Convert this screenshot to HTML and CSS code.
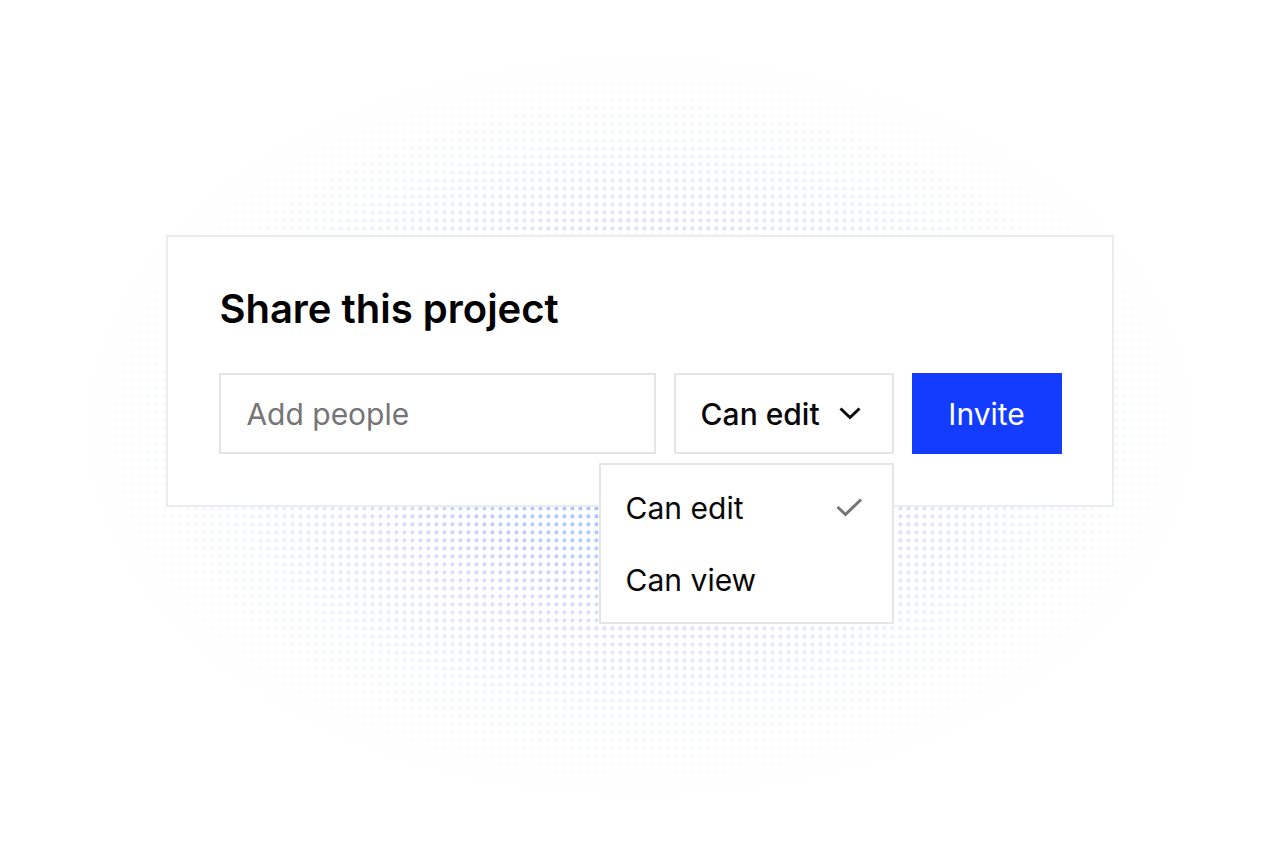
FILE: index.html
```html
<!DOCTYPE html>
<html lang="en">
<head>
  <meta charset="utf-8">
  <meta name="viewport" content="width=device-width, initial-scale=1">
  <title>Share this project</title>
  <link rel="stylesheet" href="styles.css">
</head>
<body>
  <main class="stage">
    <svg class="halftone" aria-hidden="true">
      <defs>
        <pattern id="dots" width="8" height="8" patternUnits="userSpaceOnUse">
          <circle cx="4.4" cy="4.4" r="2.05" fill="#94b2f5"/>
        </pattern>
      </defs>
      <rect width="100%" height="100%" fill="url(#dots)"/>
    </svg>
    <form class="card">
      <h1 class="title">Share this project</h1>
      <div class="row">
        <input class="people" type="text" placeholder="Add people" aria-label="Add people">
        <div class="permission">
          <select class="permission-select" aria-label="Permission">
            <option selected>Can edit</option>
            <option>Can view</option>
          </select>
          <svg class="chevron" viewBox="0 0 24 16" aria-hidden="true"><path d="M2.5 2.5L12 11.5L21.5 2.5"/></svg>
          <div class="menu" role="listbox" aria-label="Permission options">
            <button class="option" type="button" role="option" aria-selected="true">
              Can edit
              <svg class="check" viewBox="0 0 28 22" aria-hidden="true"><path d="M2.5 10L10.5 17.5L26 2.5"/></svg>
            </button>
            <button class="option" type="button" role="option" aria-selected="false">Can view</button>
          </div>
        </div>
        <button class="invite" type="button">Invite</button>
      </div>
    </form>
  </main>
</body>
</html>
```
FILE: styles.css
```css
* { box-sizing: border-box; }

body {
  margin: 0;
  background: #fff;
  color: #080808;
  font-family: Inter, "Liberation Sans", sans-serif;
  font-size: 30px;
}

.stage {
  position: relative;
  min-height: 100vh;
  padding: 235px 13%;
}

/* Halftone glow behind the card */
.halftone {
  position: absolute;
  inset: 0;
  width: 100%;
  height: 100%;
  -webkit-mask-image: radial-gradient(ellipse 44% 44% at 50% 50%, #000 0%, rgba(0, 0, 0, .8) 22%, rgba(0, 0, 0, .37) 52%, rgba(0, 0, 0, .1) 80%, transparent 100%);
  mask-image: radial-gradient(ellipse 44% 44% at 50% 50%, #000 0%, rgba(0, 0, 0, .8) 22%, rgba(0, 0, 0, .37) 52%, rgba(0, 0, 0, .1) 80%, transparent 100%);
}

.card {
  position: relative;
  padding: 48px 50px 51px 51px;
  border: 2px solid #eaecee;
  background: #fff;
}

.title {
  margin: 0 0 40px;
  color: #000;
  font-size: 40px;
  font-weight: 600;
  line-height: 48px;
}

.row {
  display: flex;
  gap: 18px;
}

.people,
.permission-select,
.invite,
.option {
  margin: 0;
  border: 0;
  border-radius: 0;
  font: inherit;
  color: inherit;
}

.people,
.permission-select {
  height: 81px;
  padding: 0 25px;
  border: 2px solid #e5e5e5;
  background: #fff;
}

.people {
  flex: 1;
  min-width: 0;
}

.people::placeholder {
  color: #757575;
  opacity: 1;
}

.permission {
  position: relative;
  width: 220px;
}

.permission-select {
  width: 100%;
  appearance: none;
  font-weight: 500;
}

.chevron {
  position: absolute;
  top: 33px;
  right: 32px;
  width: 24px;
  height: 16px;
  pointer-events: none;
}

.chevron path,
.check path {
  fill: none;
  stroke: #080808;
  stroke-width: 3;
}

.menu {
  position: absolute;
  top: 90px;
  right: 0;
  width: 295px;
  padding: 7px 0 6px;
  border: 2px solid #e5e5e5;
  background: #fff;
}

.option {
  display: flex;
  align-items: center;
  justify-content: space-between;
  width: 100%;
  height: 72px;
  padding: 0 29px 0 25px;
  background: transparent;
}

.check {
  width: 28px;
  height: 22px;
}

.check path { stroke: #757575; }

.invite {
  width: 150px;
  background: #143cff;
  color: #fff;
}
```
